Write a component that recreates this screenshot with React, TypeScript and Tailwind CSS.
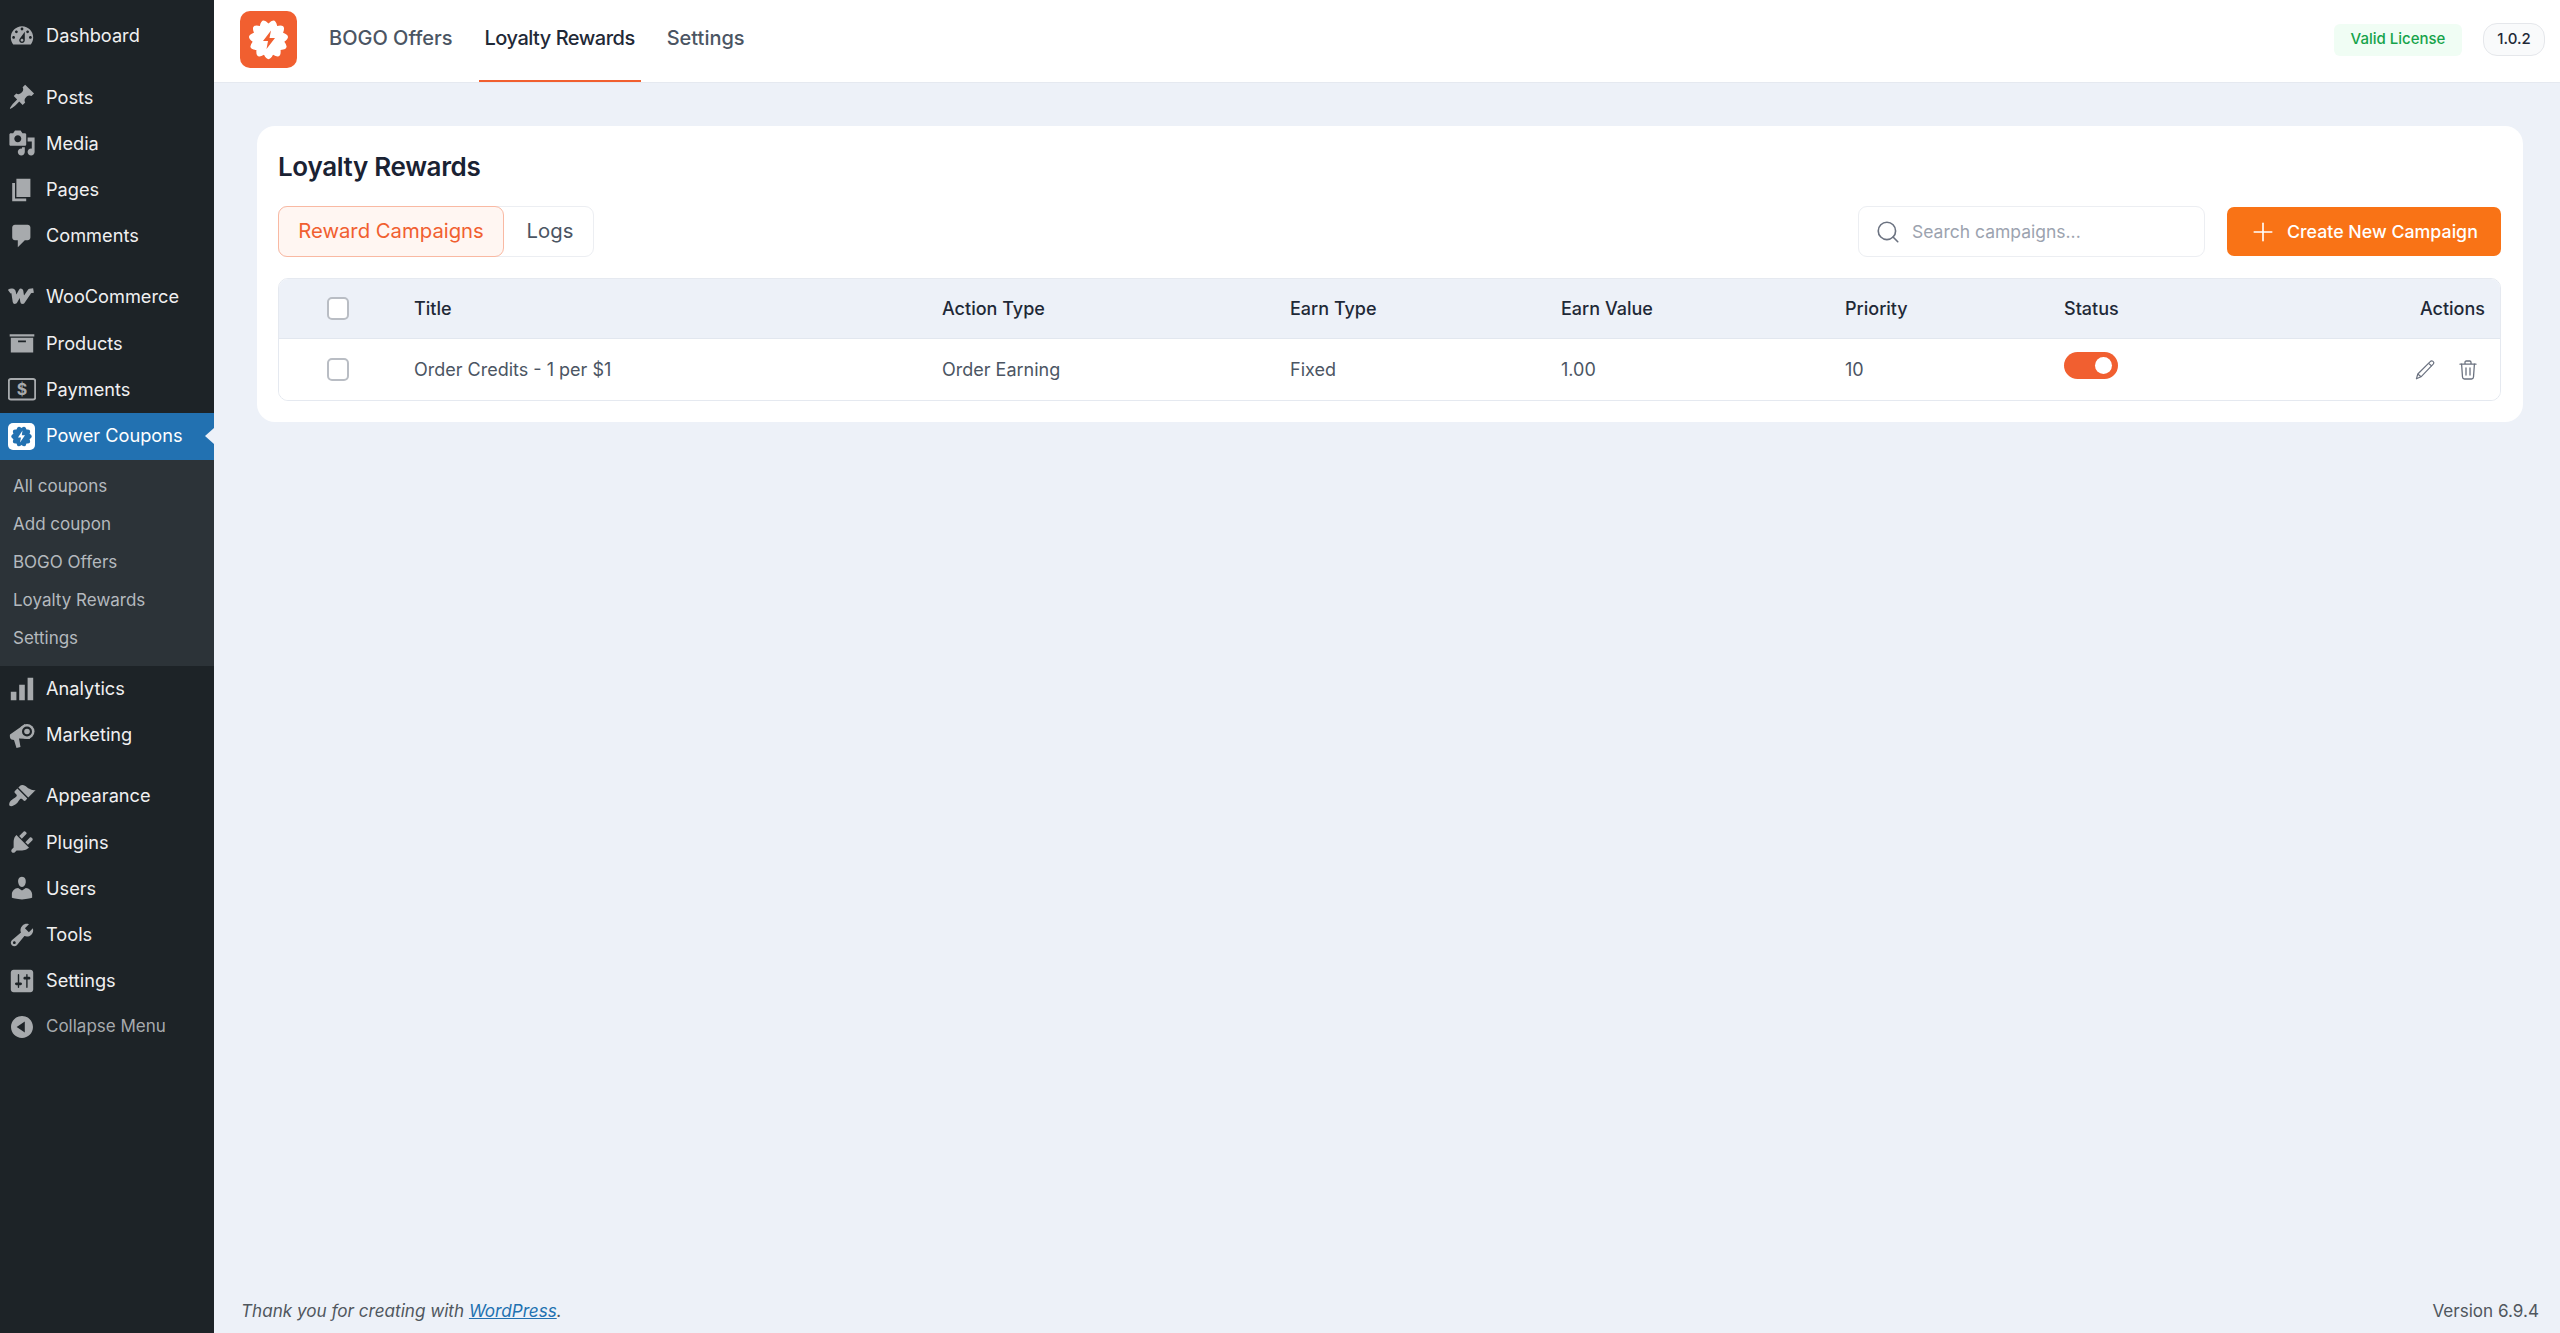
import { Plus, Search } from "lucide-react";
import type { ReactNode } from "react";

const dash: Record<string, string> = {
  dashboard:
    "M3.76 16h12.48c1.1-1.37 1.76-3.11 1.76-5 0-4.42-3.58-8-8-8s-8 3.58-8 8c0 1.89.66 3.63 1.76 5zM10 4c.55 0 1 .45 1 1s-.45 1-1 1-1-.45-1-1 .45-1 1-1zM6 6c.55 0 1 .45 1 1s-.45 1-1 1-1-.45-1-1 .45-1 1-1zm8 0c.55 0 1 .45 1 1s-.45 1-1 1-1-.45-1-1 .45-1 1-1zm-5.37 5.55L12 7v6c0 1.1-.9 2-2 2s-2-.9-2-2c0-.57.24-1.08.63-1.45zM4 10c.55 0 1 .45 1 1s-.45 1-1 1-1-.45-1-1 .45-1 1-1zm12 0c.55 0 1 .45 1 1s-.45 1-1 1-1-.45-1-1 .45-1 1-1zm-5 3c0-.55-.45-1-1-1s-1 .45-1 1 .45 1 1 1 1-.45 1-1z",
  pin: "M10.44 3.02l1.82-1.82 6.36 6.35-1.83 1.82c-1.05-.68-2.48-.57-3.41.36l-.75.75c-.92.93-1.04 2.35-.35 3.41l-1.83 1.82-2.41-2.41-2.8 2.79c-.42.42-3.38 2.71-3.8 2.29s1.86-3.39 2.28-3.81l2.79-2.79L4.1 9.36l1.83-1.82c1.05.69 2.48.57 3.4-.36l.75-.75c.93-.92 1.05-2.35.36-3.41z",
  media:
    "M13 11V4c0-.55-.45-1-1-1h-1.67L9 1H5L3.67 3H2c-.55 0-1 .45-1 1v7c0 .55.45 1 1 1h10c.55 0 1-.45 1-1zM7 4.5c1.38 0 2.5 1.12 2.5 2.5S8.38 9.5 7 9.5 4.5 8.38 4.5 7 5.62 4.5 7 4.5zM14 6h5v10.5c0 1.38-1.12 2.5-2.5 2.5S14 17.88 14 16.5s1.12-2.5 2.5-2.5c.17 0 .34.02.5.05V9h-3V6zm-4 8.05V13h2v3.5c0 1.38-1.12 2.5-2.5 2.5S7 17.88 7 16.5 8.12 14 9.5 14c.17 0 .34.02.5.05z",
  page: "M6 15V2h10v13H6zm-1 1h8v2H3V5h2v11z",
  comment: "M5 2h9c1.1 0 2 .9 2 2v7c0 1.1-.9 2-2 2h-2l-5 5v-5H5c-1.1 0-2-.9-2-2V4c0-1.1.9-2 2-2z",
  products: "M1.2 3.8h17.6v1.6H1.2zM2 6.2h16v10.6H2zM7.2 8.2v1.2h5.6V8.2z",
  chart: "M18 18V2h-4v16h4zm-6 0V7H8v11h4zm-6 0v-6H2v6h4z",
  appearance:
    "M14.48 11.06L7.41 3.99l1.5-1.5c.5-.56 2.3-.47 3.51.32 1.21.8 1.43 1.28 2.91 2.1 1.18.64 2.45 1.26 4.45.85zm-.71.71L6.7 4.7 4.93 6.47c-.39.39-.39 1.02 0 1.41l1.06 1.06c.39.39.39 1.03 0 1.42-.6.6-1.43 1.11-2.21 1.69-.35.26-.7.53-1.01.84C1.43 13.23.28 16.08 1.2 17c.91.92 3.58-.2 4.94-1.57.3-.31.58-.66.84-1.01.58-.78 1.09-1.61 1.69-2.21.39-.39 1.02-.39 1.41 0l1.06 1.06c.39.39 1.02.39 1.41 0z",
  plugins:
    "M13.11 4.36L9.87 7.6 8 5.73l3.24-3.24c.35-.34 1.05-.2 1.56.32.52.51.66 1.21.31 1.55zm-8 1.77l.91-1.12 9.01 9.01-1.19.84c-.71.71-2.63 1.16-3.82 1.16H6.14L4.9 17.26c-.59.59-1.54.59-2.12 0-.59-.58-.59-1.53 0-2.12l1.24-1.24v-3.88c0-1.13.4-3.19 1.09-3.89zm7.26 3.97l3.24-3.24c.34-.35 1.04-.21 1.55.31.52.51.66 1.21.31 1.55l-3.24 3.25z",
  users:
    "M10 9.25c-2.27 0-2.73-3.44-2.73-3.44C7 4.02 7.82 2 9.97 2c2.16 0 2.98 2.02 2.71 3.81 0 0-.41 3.44-2.68 3.44zm0 2.57L12.72 10c2.39 0 4.52 2.33 4.52 4.53v2.49s-3.65 1.13-7.24 1.13c-3.65 0-7.24-1.13-7.24-1.13v-2.49c0-2.25 1.94-4.48 4.47-4.48z",
  tools:
    "M16.68 9.77c-1.34 1.34-3.3 1.67-4.95.99l-5.41 6.52c-.99.99-2.59.99-3.58 0s-.99-2.59 0-3.57l6.52-5.42c-.68-1.65-.35-3.61.99-4.95 1.28-1.28 3.12-1.62 4.72-1.06l-2.89 2.89 2.82 2.82 2.86-2.87c.53 1.58.18 3.39-1.08 4.65zM3.81 16.21c.4.39 1.04.39 1.43 0 .4-.4.4-1.04 0-1.43-.39-.4-1.03-.4-1.43 0-.39.39-.39 1.03 0 1.43z",
  settings:
    "M18 16V4c0-1.1-.9-2-2-2H4c-1.1 0-2 .9-2 2v12c0 1.1.9 2 2 2h12c1.1 0 2-.9 2-2zM8 11h1c.55 0 1 .45 1 1s-.45 1-1 1H8v1.5c0 .28-.22.5-.5.5s-.5-.22-.5-.5V13H6c-.55 0-1-.45-1-1s.45-1 1-1h1V5.5c0-.28.22-.5.5-.5s.5.22.5.5V11zm5-2h-1c-.55 0-1-.45-1-1s.45-1 1-1h1V5.5c0-.28.22-.5.5-.5s.5.22.5.5V7h1c.55 0 1 .45 1 1s-.45 1-1 1h-1v5.5c0 .28-.22.5-.5.5s-.5-.22-.5-.5V9z",
  collapse:
    "M10 2.16c4.33 0 7.84 3.51 7.84 7.84s-3.51 7.84-7.84 7.84S2.16 14.33 2.16 10 5.71 2.16 10 2.16zm2 11.72V6.12L6.18 9.97z",
};

function Dash({ name }: { name: string }) {
  return (
    <svg viewBox="0 0 20 20" className="w-[28px] h-[28px] fill-[#a7aaad]">
      <path d={dash[name]} />
    </svg>
  );
}

function WooIcon() {
  return (
    <svg viewBox="0 0 28 28" className="w-[28px] h-[28px]">
      <path
        d="M1.2 8.6c1.8-1.3 4-1.2 4.4.8l1.4 9.2 6-10.6 1.6 10.6 7.300-10.600 3.600-.6"
        fill="none"
        stroke="#a7aaad"
        strokeWidth="4.6"
        strokeLinejoin="round"
      />
    </svg>
  );
}

function PaymentsIcon() {
  return (
    <svg viewBox="0 0 28 28" className="w-[28px] h-[28px]">
      <rect x="0.8" y="4" width="26.4" height="20.5" rx="2" fill="none" stroke="#a7aaad" strokeWidth="2" />
      <text x="14" y="20" textAnchor="middle" fontSize="16" fontWeight="700" fontFamily="Inter, sans-serif" fill="#a7aaad">
        $
      </text>
    </svg>
  );
}

function MegaphoneIcon() {
  return (
    <svg viewBox="0 0 28 28" className="w-[28px] h-[28px]">
      <path d="M2 13.5 17 3 22 18 11 17.5 12.5 26 8.500 27 6 19 3.500 18.500C2 18 1.500 15 2 13.500z" fill="#a7aaad" />
      <circle cx="19" cy="10.500" r="7.500" fill="#a7aaad" />
      <circle cx="19" cy="10.500" r="5" fill="#1d2327" />
      <circle cx="19" cy="10.500" r="2.800" fill="#a7aaad" />
    </svg>
  );
}

// scalloped badge outline, same shape for the app logo and the menu icon
function badgePath(cx: number, cy: number, outer: number, inner: number, n: number) {
  let d = "";
  for (let i = 0; i < n; i++) {
    const a0 = (i / n) * Math.PI * 2 - Math.PI / 2;
    const a1 = ((i + 0.5) / n) * Math.PI * 2 - Math.PI / 2;
    const a2 = ((i + 1) / n) * Math.PI * 2 - Math.PI / 2;
    if (i === 0) d += `M${cx + inner * Math.cos(a0)} ${cy + inner * Math.sin(a0)}`;
    d += `Q${cx + outer * Math.cos(a1)} ${cy + outer * Math.sin(a1)} ${cx + inner * Math.cos(a2)} ${cy + inner * Math.sin(a2)}`;
  }
  return d + "Z";
}

function Logo() {
  return (
    <svg viewBox="0 0 57 57" className="w-[57px] h-[57px] shrink-0">
      <rect width="57" height="57" rx="10" fill="#f15f30" />
      <path d={badgePath(28.5, 28.5, 24, 16, 11)} fill="#fff" />
      <path d="M31 19.500 23 30h5l-1.500 8 8.500-11h-5.500z" fill="#f15f30" />
    </svg>
  );
}

function MenuLogo() {
  return (
    <svg viewBox="0 0 27 27" className="w-[27px] h-[27px]">
      <rect width="27" height="27" rx="5" fill="#fff" />
      <path d={badgePath(13.5, 13.5, 12.5, 8.5, 10)} fill="#2271b1" />
      <path d="M14.500 7.500 10 14.500h3l-1 5 5-7.200h-3.200z" fill="#fff" />
    </svg>
  );
}

function MenuItem({ icon, label, dim }: { icon: ReactNode; label: string; dim?: boolean }) {
  return (
    <div className={`flex h-[46.2px] items-center pl-[8px] ${dim ? "text-[17px] text-[#a7aaad]" : "text-[18.2px] text-[#f0f0f1]"}`}>
      <span className="flex w-[38px] shrink-0">{icon}</span>
      {label}
    </div>
  );
}

function Sidebar() {
  return (
    <aside className="flex w-[214px] shrink-0 flex-col bg-[#1d2327] pt-[13px] font-['Inter',sans-serif]">
      <MenuItem icon={<Dash name="dashboard" />} label="Dashboard" />
      <div className="mt-[15px]">
        <MenuItem icon={<Dash name="pin" />} label="Posts" />
        <MenuItem icon={<Dash name="media" />} label="Media" />
        <MenuItem icon={<Dash name="page" />} label="Pages" />
        <MenuItem icon={<Dash name="comment" />} label="Comments" />
      </div>
      <div className="mt-[15px]">
        <MenuItem icon={<WooIcon />} label="WooCommerce" />
        <MenuItem icon={<Dash name="products" />} label="Products" />
        <MenuItem icon={<PaymentsIcon />} label="Payments" />
      </div>
      <div className="relative flex h-[47px] items-center bg-[#2271b1] pl-[8px] text-[18.2px] text-white">
        <span className="flex w-[38px] shrink-0">
          <MenuLogo />
        </span>
        Power Coupons
        <span className="absolute right-0 top-[15px] border-y-[8px] border-r-[9px] border-y-transparent border-r-[#edf1f8]" />
      </div>
      <div className="flex flex-col bg-[#2c3338] py-[8px] text-[17px] text-[#b4b9be]">
        {["All coupons", "Add coupon", "BOGO Offers", "Loyalty Rewards", "Settings"].map((s) => (
          <div key={s} className="flex h-[38px] items-center pl-[13px]">
            {s}
          </div>
        ))}
      </div>
      <MenuItem icon={<Dash name="chart" />} label="Analytics" />
      <MenuItem icon={<MegaphoneIcon />} label="Marketing" />
      <div className="mt-[15px]">
        <MenuItem icon={<Dash name="appearance" />} label="Appearance" />
        <MenuItem icon={<Dash name="plugins" />} label="Plugins" />
        <MenuItem icon={<Dash name="users" />} label="Users" />
        <MenuItem icon={<Dash name="tools" />} label="Tools" />
        <MenuItem icon={<Dash name="settings" />} label="Settings" />
        <MenuItem icon={<Dash name="collapse" />} label="Collapse Menu" dim />
      </div>
    </aside>
  );
}

function TopBar() {
  return (
    <header className="flex h-[83px] shrink-0 items-start justify-between border-b border-[#e5e9f0] bg-white pl-[26px] pr-[15px]">
      <div className="flex h-full items-start">
        <div className="pt-[11px]">
          <Logo />
        </div>
        <nav className="ml-[26px] flex h-full gap-[20px] text-[20px] font-medium text-[#4b5563]">
          <a className="flex h-full items-center px-[6px] pb-[6px]">BOGO Offers</a>
          <a className="flex h-full items-center border-b-2 border-[#f15f30] px-[6px] pb-[4px] tracking-[-0.5px] text-[#1f2937]">
            Loyalty Rewards
          </a>
          <a className="flex h-full items-center px-[6px] pb-[6px]">Settings</a>
        </nav>
      </div>
      <div className="flex items-center gap-[21px] pt-[23px]">
        <span className="flex h-[32px] w-[128px] items-center justify-center rounded-[6px] bg-[#f0fdf4] text-[15px] font-medium text-[#16a34a]">
          Valid License
        </span>
        <span className="flex h-[33px] w-[62px] items-center justify-center rounded-[14px] border border-[#e5e7eb] bg-[#f9fafb] text-[15px] font-medium text-[#1f2937]">
          1.0.2
        </span>
      </div>
    </header>
  );
}

function Checkbox() {
  return <span className="block h-[23px] w-[22px] rounded-[5px] border-2 border-[#b9bdc4] bg-white" />;
}

const COLS = "grid grid-cols-[135px_528px_348px_271px_284px_219px_1fr] items-center";

function PencilIcon() {
  return (
    <svg viewBox="0 0 20 20" className="h-[20px] w-[20px]" fill="none" stroke="#6b7280" strokeWidth="1.2" strokeLinejoin="round">
      <path d="M15.200 1.600a1.600 1.600 0 0 1 3 2.600L6 16.800l-4.600 2 1.400-4.800z" />
      <path d="M13.600 3.400l3.100 2.600M2.800 14l3.200 2.800" />
    </svg>
  );
}

function TrashIcon() {
  return (
    <svg viewBox="0 0 18 20" className="h-[20px] w-[18px]" fill="none" stroke="#6b7280" strokeWidth="1.3" strokeLinecap="round">
      <path d="M1 4.200h16M6 4V2.200C6 1.500 6.500 1 7.200 1h3.600c.7 0 1.200.5 1.200 1.200V4" />
      <path d="M2.600 4.200l.9 12.800c.1 1.200.9 2 2 2h7c1.100 0 1.900-.8 2-2l.9-12.800" />
      <path d="M7 8v7M11 8v7" />
    </svg>
  );
}

function Table() {
  return (
    <div className="mt-[21px] overflow-hidden rounded-[10px] border border-[#e5e9f0]">
      <div className={`${COLS} h-[60px] border-b border-[#e2e7ef] bg-[#edf1f8] text-[18px] font-medium text-[#1f2937]`}>
        <div className="pl-[48px]">
          <Checkbox />
        </div>
        <div>Title</div>
        <div>Action Type</div>
        <div>Earn Type</div>
        <div>Earn Value</div>
        <div>Priority</div>
        <div className="flex justify-between pr-[15px]">
          <span>Status</span>
          <span>Actions</span>
        </div>
      </div>
      <div className={`${COLS} h-[61px] bg-white text-[18px] text-[#4b5563]`}>
        <div className="pl-[48px]">
          <Checkbox />
        </div>
        <div>Order Credits - 1 per $1</div>
        <div>Order Earning</div>
        <div>Fixed</div>
        <div>1.00</div>
        <div>10</div>
        <div className="flex items-center justify-between pr-[23px]">
          <span className="mb-[9px] flex h-[27px] w-[54px] items-center justify-end rounded-full bg-[#f15f30] pr-[6px]">
            <span className="h-[17px] w-[17px] rounded-full bg-white" />
          </span>
          <span className="flex items-center gap-[24px]">
            <PencilIcon />
            <TrashIcon />
          </span>
        </div>
      </div>
    </div>
  );
}

function Card() {
  return (
    <section className="rounded-[18px] bg-white pb-[21px] pl-[21px] pr-[22px] pt-[23px]">
      <h1 className="text-[26px] font-semibold leading-[36px] tracking-[-0.33px] text-[#1a2233]">Loyalty Rewards</h1>
      <div className="mt-[21px] flex h-[51px] items-center justify-between">
        <div className="flex h-full w-[316px] rounded-[9px] border border-[#eceef2]">
          <button className="-m-px h-[51px] w-[226px] rounded-[9px] border border-[#f9b9a3] bg-[#fff6f2] text-[20.3px] text-[#f15f30]">
            Reward Campaigns
          </button>
          <button className="flex-1 pl-[4px] text-[20.3px] text-[#4b5563]">Logs</button>
        </div>
        <div className="flex h-full items-center gap-[22px]">
          <div className="flex h-full w-[347px] items-center rounded-[9px] border border-[#eceef2] pl-[16px]">
            <Search size={26} strokeWidth={1.5} className="text-[#6b7280]" />
            <span className="ml-[11px] pt-px text-[17.5px] text-[#9ca3af]">Search campaigns...</span>
          </div>
          <button className="flex h-[49px] w-[274px] items-center rounded-[7px] bg-[#f97316] pl-[21px] text-[17.8px] font-medium text-white">
            <Plus size={30} strokeWidth={1.3} />
            <span className="ml-[9px] pt-px">Create New Campaign</span>
          </button>
        </div>
      </div>
      <Table />
    </section>
  );
}

export default function App() {
  return (
    <div className="flex h-[1333px] w-full overflow-hidden bg-[#edf1f8] font-['Inter',sans-serif]">
      <Sidebar />
      <main className="flex min-w-0 flex-1 flex-col">
        <TopBar />
        <div className="flex-1 pl-[43px] pr-[37px] pt-[43px]">
          <Card />
        </div>
        <footer className="flex items-center justify-between pb-[10px] pl-[27px] pr-[21px] text-[17.1px] leading-[24px] text-[#50575e]">
          <span className="italic">
            Thank you for creating with <a className="text-[#2271b1] underline">WordPress</a>.
          </span>
          <span>Version 6.9.4</span>
        </footer>
      </main>
    </div>
  );
}
